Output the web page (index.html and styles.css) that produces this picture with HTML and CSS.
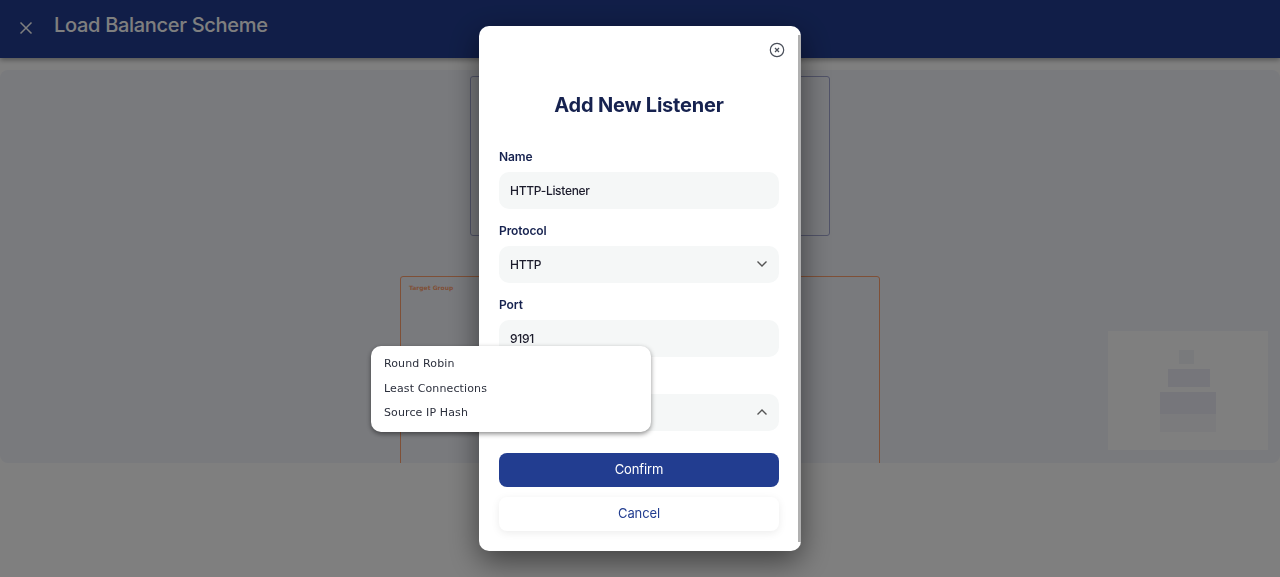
FILE: index.html
```html
<!DOCTYPE html>
<html lang="en">
<head>
  <meta charset="UTF-8" />
  <meta name="viewport" content="width=device-width, initial-scale=1.0"/>
  <title>Load Balancer Scheme</title>
  <link rel="stylesheet" href="styles.css">
</head>
<body>
  <header class="topbar">
    <svg class="topbar-close" width="14" height="14" viewBox="0 0 14 14"><path d="M1.5 1.5l11 11M12.5 1.5l-11 11" /></svg>
    <h1 class="topbar-title">Load Balancer Scheme</h1>
  </header>

  <main class="canvas">
    <div class="scheme-box"></div>
    <div class="target-group"><span class="target-group-label">Target Group</span></div>

    <!-- minimap -->
    <div class="minimap">
      <div class="minimap-view"></div>
      <div class="minimap-node node-a"></div>
      <div class="minimap-node node-b"></div>
      <div class="minimap-node node-c"></div>
    </div>
  </main>

  <div class="backdrop">
    <div class="modal">
      <div class="modal-scrollbar"></div>
      <div class="modal-top">
        <svg class="modal-close" width="16" height="16" viewBox="0 0 16 16">
          <circle cx="8" cy="8" r="6.7" />
          <path d="M6 6l4 4M10 6l-4 4" />
        </svg>
      </div>
      <h2 class="modal-title">Add New Listener</h2>

      <div class="form-group">
        <label class="form-label">Name</label>
        <div class="field">HTTP-Listener</div>
      </div>
      <div class="form-group">
        <label class="form-label">Protocol</label>
        <div class="field">HTTP
          <svg class="chevron" width="12" height="8" viewBox="0 0 12 8"><path d="M1.5 1.5L6 6l4.5-4.5" /></svg>
        </div>
      </div>
      <div class="form-group">
        <label class="form-label">Port</label>
        <div class="field">9191</div>
      </div>
      <div class="form-group">
        <label class="form-label">Algorithm</label>
        <div class="field field-open">
          <svg class="chevron" width="12" height="8" viewBox="0 0 12 8"><path d="M1.5 6.5L6 2l4.5 4.5" /></svg>
        </div>
      </div>

      <div class="button-group">
        <button class="btn btn-primary">Confirm</button>
        <button class="btn btn-secondary">Cancel</button>
      </div>
    </div>

    <ul class="menu">
      <li class="menu-item">Round Robin</li>
      <li class="menu-item">Least Connections</li>
      <li class="menu-item">Source IP Hash</li>
    </ul>
  </div>
</body>
</html>
```

FILE: styles.css
```css
:root {
  --primary: #223d90;
  --navy: #16224f;
  --field-bg: #f5f7f7;
}
* { box-sizing: border-box; }
html, body { height: 100%; }
body {
  margin: 0;
  height: 577px;
  overflow: hidden;
  background: #fff;
  font-family: "Inter", "Liberation Sans", sans-serif;
}

/* page under the overlay */
.topbar {
  height: 58px;
  padding: 0 0 0 19px;
  display: flex;
  align-items: flex-start;
  gap: 21px;
  background: var(--primary);
  box-shadow: 0 2px 5px rgba(0, 0, 0, 0.35);
  position: relative;
}
.topbar-close { margin-top: 21px; flex: none; }
.topbar-close path { stroke: #fff; stroke-width: 1.5; fill: none; }
.topbar-title {
  margin: 12px 0 0;
  font-size: 20px;
  line-height: 26px;
  font-weight: 500;
  letter-spacing: -0.3px;
  color: #fff;
}
.canvas {
  position: relative;
  height: 393px;
  margin-top: 12px;
  background: #f2f4fb;
  border-radius: 8px;
  overflow: hidden;
}
.scheme-box {
  position: absolute;
  left: 470px;
  top: 6px;
  width: 360px;
  height: 160px;
  border: 1px solid #a2a6d0;
  border-radius: 3px;
}
.target-group {
  position: absolute;
  left: 400px;
  top: 206px;
  width: 480px;
  height: 300px;
  border: 1px solid #ffa06e;
  border-radius: 3px;
}
.target-group-label {
  position: absolute;
  left: 8px;
  top: 7px;
  font-family: "DejaVu Sans", sans-serif;
  font-size: 6px;
  font-weight: 700;
  color: #ffa06e;
}
.minimap {
  position: absolute;
  left: 1108px;
  top: 261px;
  width: 160px;
  height: 119px;
  background: #fefefe;
}
.minimap-view {
  position: absolute;
  left: 5px;
  top: 37px;
  width: 150px;
  height: 46px;
  background: #fff;
}
.minimap-node { position: absolute; background: #ecedf6; }
.node-a { left: 71px; top: 19px; width: 15px; height: 14px; background: #f2f4f8; }
.node-b { left: 60px; top: 38px; width: 42px; height: 18px; }
.node-c {
  left: 52px;
  top: 61px;
  width: 56px;
  height: 40px;
  background: linear-gradient(#ecedf6 55%, #f6f6fa 55%);
}

/* overlay */
.backdrop {
  position: fixed;
  inset: 0;
  background: rgba(0, 0, 0, 0.5);
}
.modal {
  position: absolute;
  left: 479px;
  top: 26px;
  width: 322px;
  height: 525px;
  padding: 0 22px 0 20px;
  background: #fff;
  border-radius: 10px;
  box-shadow: 0 10px 30px rgba(0, 0, 0, 0.5);
  color: var(--navy);
}
.modal-scrollbar {
  position: absolute;
  right: 0;
  top: 9px;
  bottom: 9px;
  width: 3px;
  background: #b0b0b0;
}
.modal-top {
  display: flex;
  justify-content: flex-end;
  padding: 16px 0 0;
  margin-right: -6px;
  height: 32px;
}
.modal-close circle, .modal-close path { stroke: #4a4f5a; stroke-width: 1.2; fill: none; }
.modal-title {
  margin: 33px 0 30px;
  text-align: center;
  font-size: 20px;
  line-height: 28px;
  font-weight: 700;
  letter-spacing: -0.2px;
  color: var(--navy);
}
.form-group { height: 74px; }
.form-label {
  display: block;
  height: 23px;
  font-size: 12px;
  line-height: 16px;
  font-weight: 600;
  letter-spacing: -0.1px;
}
.field {
  height: 37px;
  padding: 0 11px 1px;
  display: flex;
  align-items: center;
  justify-content: space-between;
  border-radius: 10px;
  background: var(--field-bg);
  font-size: 12px;
  font-weight: 500;
  letter-spacing: -0.3px;
  color: #1c1c2c;
}
.field-open { justify-content: flex-end; }
.chevron path { stroke: #555; stroke-width: 1.4; fill: none; }
.button-group {
  margin-top: 8px;
  display: flex;
  flex-direction: column;
  gap: 10px;
}
.btn {
  width: 100%;
  height: 34px;
  padding: 0 0 2px;
  border: none;
  border-radius: 8px;
  font-family: inherit;
  font-size: 13px;
  letter-spacing: -0.1px;
}
.btn-primary { background: var(--primary); color: #fff; }
.btn-secondary {
  background: #fff;
  color: var(--primary);
  box-shadow: 0 2px 8px rgba(0, 0, 0, 0.08);
}
.menu {
  position: absolute;
  left: 371px;
  top: 346px;
  width: 280px;
  height: 86px;
  margin: 0;
  padding: 6px 13px;
  list-style: none;
  background: #fff;
  border-radius: 10px;
  box-shadow: 0 2px 5px rgba(0, 0, 0, 0.45);
}
.menu-item {
  height: 24.5px;
  font-family: "DejaVu Sans", sans-serif;
  font-size: 11px;
  line-height: 24px;
  letter-spacing: 0.12px;
  color: #2b2f3c;
}
```
